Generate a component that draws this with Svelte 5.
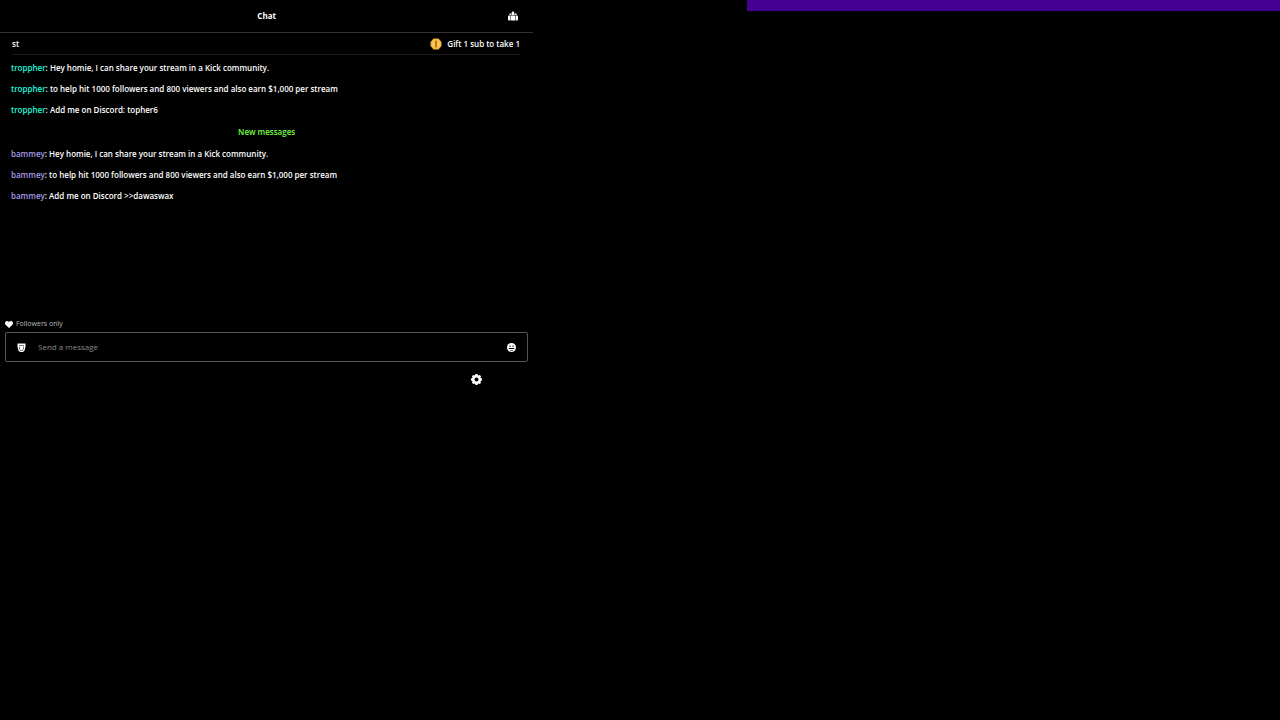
<script>
	let message = $state('');

	const messages = [
		{ user: 'troppher', color: 'cyan', text: 'Hey homie, I can share your stream in a Kick community.' },
		{
			user: 'troppher',
			color: 'cyan',
			text: 'to help hit 1000 followers and 800 viewers and also earn $1,000 per stream'
		},
		{ user: 'troppher', color: 'cyan', text: 'Add me on Discord: topher6' }
	];

	const newMessages = [
		{ user: 'bammey', color: 'lilac', text: 'Hey homie, I can share your stream in a Kick community.' },
		{
			user: 'bammey',
			color: 'lilac',
			text: 'to help hit 1000 followers and 800 viewers and also earn $1,000 per stream'
		},
		{ user: 'bammey', color: 'lilac', text: 'Add me on Discord >>dawaswax' }
	];
</script>

{#snippet row(item)}
	<li><b class={item.color}>{item.user}</b><b>:</b> {item.text}</li>
{/snippet}

<main>
	<section class="chat">
		<header>
			<h1>Chat</h1>
			<button class="icon community" aria-label="Community">
				<svg viewBox="0 0 20 20" width="10" height="10">
					<path d="M10 0l3 4v4H7V4zM3 5h3v3H3zM14 5h3v3h-3z" />
					<path d="M6 9h8v10H6zM0 11q0-2 2-2h3v10H2q-2 0-2-2zM15 9h3q2 0 2 2v6q0 2-2 2h-3z" />
				</svg>
			</button>
		</header>

		<div class="gifts">
			<span>st</span>
			<div class="leader">
				<svg viewBox="0 0 24 24" width="12" height="12">
					<path d="M7 1h10l6 7v8l-6 7H7l-6-7V8z" fill="#efb63c" />
					<path d="M8 4h8l4 5v6l-4 5H8l-4-5V9z" fill="#f6cb50" />
					<path d="M9 7l3-2h2v14h-4V9H9z" fill="#c66f20" />
				</svg>
				<span>Gift 1 sub to take 1st</span>
			</div>
		</div>

		<ul>
			{#each messages as item}
				{@render row(item)}
			{/each}
			<li class="divider">New messages</li>
			{#each newMessages as item}
				{@render row(item)}
			{/each}
		</ul>

		<form onsubmit={(e) => e.preventDefault()}>
			<p class="mode">
				<svg viewBox="0 0 16 14" width="8" height="7">
					<path d="M8 14L1 7.500C-1 5 0 0 4 0q3 0 4 2.500Q9 0 12 0c4 0 5 5 3 7.500z" />
				</svg>
				Followers only
			</p>
			<div class="field">
				<button class="icon" type="button" aria-label="Identity">
					<svg viewBox="0 0 18 18" width="9" height="9">
						<path d="M1 1h16v7l-2 7-3 3H6l-3-3-2-7z" />
						<path d="M4 5h10M5 7v5l2 3h4l2-3V7" fill="none" stroke="#000" stroke-width="1" />
						<path d="M7 8h4v4H7z" />
					</svg>
				</button>
				<input type="text" placeholder="Send a message" aria-label="Send a message" bind:value={message} />
				<button class="icon" type="button" aria-label="Emotes">
					<svg viewBox="0 0 18 18" width="9" height="9">
						<circle cx="9" cy="9" r="9" />
						<path d="M5 5h2v3H5zM11 5h2v3h-2zM3 10h12l-1 2H4zM6 14h6v1H6z" fill="#000" />
					</svg>
				</button>
			</div>
			<div class="actions">
				<button class="icon" type="button" aria-label="Settings">
					<svg viewBox="0 0 22 22" width="11" height="11">
						<path
							fill-rule="evenodd"
							d="M9 0h4l1 3 4-1 2 3-1 3 3 1v4l-3 1 1 4-3 2-3-1-1 3H9l-1-3-4 1-2-3 1-3-3-1V9l3-1-1-4 3-2 3 1zM11 7a4 4 0 1 0 0 8 4 4 0 0 0 0-8z"
						/>
					</svg>
				</button>
			</div>
		</form>
	</section>

	<div class="banner"></div>
</main>

<style>
	:global(body) {
		margin: 0;
		background: #000;
	}
	main {
		display: grid;
		grid-template-columns: 5fr 2fr 5fr;
		align-items: start;
		color: #fff;
		font-family: 'Open Sans', 'Noto Sans', sans-serif;
		font-size: 8px;
		font-weight: 600;
		line-height: 12px;
	}
	header {
		display: grid;
		grid-template-columns: 1fr auto 1fr;
		align-items: center;
		height: 32px;
		padding: 0 15px;
		border-bottom: 1px solid #333;
	}
	h1 {
		grid-column: 2;
		margin: 0;
		font-size: 8px;
		font-weight: 700;
	}
	.icon {
		display: flex;
		padding: 0;
		border: 0;
		background: none;
		color: #fff;
		cursor: pointer;
	}
	svg {
		flex: none;
		fill: currentColor;
	}
	.community {
		justify-self: end;
	}
	.gifts {
		display: flex;
		justify-content: space-between;
		align-items: center;
		height: 21px;
		margin: 0 13px 0 12px;
		border-bottom: 1px solid #191919;
	}
	.leader {
		display: flex;
		align-items: center;
		gap: 5px;
		width: 90px;
		overflow: hidden;
		white-space: nowrap;
	}
	ul {
		display: grid;
		row-gap: 9px;
		margin: 0;
		padding: 7px 11px;
		min-height: 249px;
		align-content: start;
		list-style: none;
	}
	b {
		font-weight: 600;
	}
	.cyan {
		color: #24f8df;
	}
	.lilac {
		color: #a79ce8;
	}
	.divider {
		color: #75fd46;
		line-height: 14px;
		text-align: center;
	}
	form {
		padding: 0 5px;
	}
	.mode {
		display: flex;
		align-items: center;
		gap: 3px;
		margin: 0 0 2px;
		color: #bbb;
		font-size: 7px;
		font-weight: 500;
	}
	.mode svg {
		color: #fff;
	}
	.field {
		display: flex;
		align-items: center;
		gap: 12px;
		height: 28px;
		padding: 0 11px;
		border: 1px solid #555;
		border-radius: 2px;
	}
	input {
		flex: 1;
		min-width: 0;
		padding: 0;
		border: 0;
		outline: 0;
		background: none;
		color: #fff;
		font: inherit;
		font-weight: 500;
	}
	input::placeholder {
		color: #888;
		opacity: 1;
	}
	.actions {
		display: flex;
		justify-content: flex-end;
		padding: 12px 46px;
	}
	.banner {
		grid-column: 3;
		height: 11px;
		background: #430092;
	}
</style>
